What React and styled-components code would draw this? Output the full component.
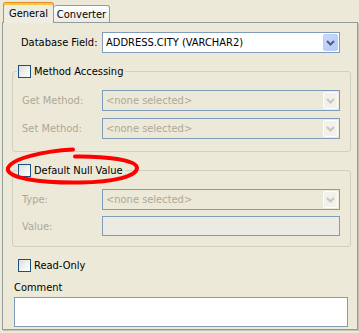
import React from "react";
import styled, { createGlobalStyle } from "styled-components";

const Global = createGlobalStyle`
  html, body { margin: 0; padding: 0; background: #ECE9D8; }
  body { font-family: "DejaVu Sans Condensed", "Liberation Sans", Arial, sans-serif; font-size: 11px; color: #000; }
  * { box-sizing: border-box; }
`;

const Page = styled.div`
  position: relative;
  width: 359px;
  height: 333px;
  padding: 2px 1px 0 2px;
  background: #ECE9D8;
`;

const TabRow = styled.div`
  display: flex;
  align-items: flex-end;
  height: 21px;
  margin-bottom: -1px;
  padding-left: 1px;
  position: relative;
  z-index: 1;
`;

const Tab = styled.div`
  display: flex;
  align-items: center;
  justify-content: center;
  border: 1px solid #919B9C;
  border-radius: 3px 3px 0 0;
  ${(p) =>
    p.$active
      ? `
    height: 21px;
    width: 51px;
    border-bottom: none;
    border-top: 1px solid #E68B2C;
    box-shadow: inset 0 2px 0 #FFC83C;
    background: #EFEDE2;
    padding-top: 1px;
  `
      : `
    height: 18px;
    width: 56px;
    border-left: none;
    background: linear-gradient(#FFFFFF, #ECEBE5);
    padding-top: 1px;
  `}
`;

const Panel = styled.div`
  height: 308px;
  border: 1px solid #919B9C;
  box-shadow: 1px 1px 0 #C5C2B2;
  background: #ECE9D8;
  padding: 9px 6px 2px 9px;
  display: flex;
  flex-direction: column;
`;

const FieldRow = styled.div`
  display: flex;
  align-items: center;
  padding: ${(p) => p.$pad || "0"};
  margin-top: ${(p) => p.$mt || 0}px;
`;

const Label = styled.span`
  width: ${(p) => p.$w || 80}px;
  flex: none;
  color: ${(p) => (p.$disabled ? "#ACA899" : "#000")};
  white-space: nowrap;
`;

const Combo = styled.div`
  flex: 1;
  height: ${(p) => p.$h || 21}px;
  border: 1px solid #7F9DB9;
  background: ${(p) => (p.$disabled ? "#ECE9D8" : "#FFFFFF")};
  color: ${(p) => (p.$disabled ? "#ACA899" : "#000")};
  display: flex;
  align-items: center;
  padding: 1px 1px 1px 3px;
`;

const ComboText = styled.span`
  flex: 1;
  white-space: nowrap;
  overflow: hidden;
`;

const ArrowButton = styled.div`
  width: 15px;
  height: 100%;
  flex: none;
  display: flex;
  align-items: center;
  justify-content: center;
  border-radius: 2px;
  border: 1px solid ${(p) => (p.$disabled ? "#FFFFFF" : "#BCCDF6")};
  background: ${(p) =>
    p.$disabled
      ? "#F2F1EB"
      : "linear-gradient(135deg, #CBD8FB 0%, #B7C9F6 100%)"};
`;

const TextField = styled.div`
  flex: 1;
  height: ${(p) => p.$h || 20}px;
  border: 1px solid #7F9DB9;
  background: ${(p) => p.$bg || "#FFFFFF"};
`;

const Group = styled.fieldset`
  margin: ${(p) => p.$mt || 0}px 0 0 0;
  padding: 12px 10px ${(p) => p.$pb || 12}px 9px;
  border: 1px solid #D0D0BF;
  border-radius: 3px;
  min-width: 0;
`;

const Legend = styled.legend`
  margin-left: -5px;
  padding: 0 2px 0 1px;
  height: 13px;
  display: flex;
  align-items: center;
  gap: 3px;
`;

const Check = styled.span`
  width: 13px;
  height: 13px;
  flex: none;
  border: 1px solid #1C5180;
  background: linear-gradient(135deg, #DCDCD7 0%, #F4F4F1 60%, #FFFFFF 100%);
`;

const CheckRow = styled.div`
  display: flex;
  align-items: center;
  gap: 3px;
  height: 13px;
  margin: 12px 0 0 6px;
`;

const CheckText = styled.span`
  line-height: 13px;
  white-space: nowrap;
`;

const CommentLabel = styled.div`
  margin: 9px 0 0 2px;
  line-height: 14px;
`;

const CommentBox = styled.div`
  height: 31px;
  margin: 2px 3px 0 2px;
  border: 1px solid #7F9DB9;
  background: #FFFFFF;
`;

const Overlay = styled.svg`
  position: absolute;
  left: 0;
  top: 0;
  pointer-events: none;
  z-index: 5;
`;

const Chevron = ({ color }) => (
  <svg width="9" height="6" viewBox="0 0 9 6">
    <polyline points="1,1 4.5,4.5 8,1" fill="none" stroke={color} strokeWidth="2" />
  </svg>
);

const ComboBox = ({ text, disabled }) => (
  <Combo $disabled={disabled}>
    <ComboText>{text}</ComboText>
    <ArrowButton $disabled={disabled}>
      <Chevron color={disabled ? "#C9C7BA" : "#4D6185"} />
    </ArrowButton>
  </Combo>
);

export default function App() {
  return (
    <>
      <Global />
      <Page>
        <TabRow>
          <Tab $active>General</Tab>
          <Tab>Converter</Tab>
        </TabRow>
        <Panel>
          <FieldRow $pad="0 11px 0 9px">
            <Label $w={81}>Database Field:</Label>
            <ComboBox text="ADDRESS.CITY (VARCHAR2)" />
          </FieldRow>

          <Group $mt={12}>
            <Legend>
              <Check />
              <CheckText>Method Accessing</CheckText>
            </Legend>
            <FieldRow>
              <Label $disabled>Get Method:</Label>
              <ComboBox text="<none selected>" disabled />
            </FieldRow>
            <FieldRow $mt={7}>
              <Label $disabled>Set Method:</Label>
              <ComboBox text="<none selected>" disabled />
            </FieldRow>
          </Group>

          <Group $mt={12} $pb={10}>
            <Legend>
              <Check />
              <CheckText>Default Null Value</CheckText>
            </Legend>
            <FieldRow>
              <Label $disabled>Type:</Label>
              <ComboBox text="<none selected>" disabled />
            </FieldRow>
            <FieldRow $mt={6}>
              <Label $disabled>Value:</Label>
              <TextField $bg="#EBEBE4" />
            </FieldRow>
          </Group>

          <CheckRow>
            <Check />
            <CheckText>Read-Only</CheckText>
          </CheckRow>
          <CommentLabel>Comment</CommentLabel>
          <CommentBox />
        </Panel>
        <Overlay width="359" height="333" viewBox="0 0 359 333">
          <path
            d="M73,149.5 C45,151 12,158 8,168 C5,178 40,183 80,182.5 C115,182 137,176 137,168 C137,160 105,156 75,156.5"
            fill="none"
            stroke="#FF0000"
            strokeWidth="4"
            strokeLinecap="round"
          />
        </Overlay>
      </Page>
    </>
  );
}
